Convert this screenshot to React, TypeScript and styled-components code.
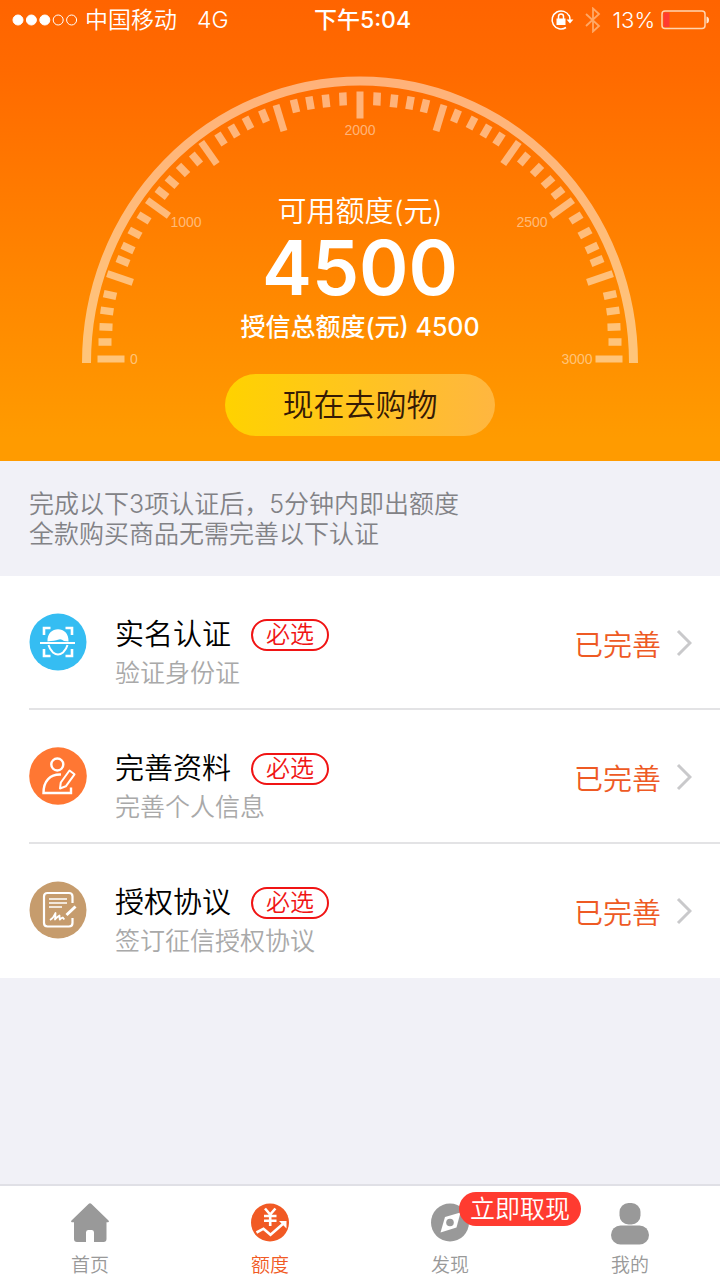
import React from "react";
import styled, { createGlobalStyle } from "styled-components";

const GlobalStyle = createGlobalStyle`
  *, *::before, *::after { box-sizing: border-box; }
  body {
    margin: 0;
    background: #f1f1f7;
    font-family: Inter, "Noto Sans CJK SC", sans-serif;
    font-weight: 350;
  }
  button { font: inherit; border: 0; cursor: pointer; }
  a { color: inherit; text-decoration: none; }
  svg { display: block; flex-shrink: 0; }
  h2, p, ul { margin: 0; padding: 0; font-weight: inherit; }
`;

const Page = styled.div`
  display: flex;
  flex-direction: column;
  min-height: 100vh;
`;

const Hero = styled.header`
  display: flex;
  flex-direction: column;
  align-items: center;
  padding-bottom: 25px;
  color: #fff;
  background: linear-gradient(#ff6400, #ff6a00 15%, #ff9b00 95%);
`;

const StatusBar = styled.div`
  display: grid;
  grid-template-columns: 1fr auto 1fr;
  align-items: center;
  width: 100%;
  height: 40px;
  padding: 0 11px 0 12px;
  font-size: 23px;
  line-height: 40px;
`;

const Carrier = styled.div`
  display: flex;
  align-items: center;
  gap: 7px;
`;

const Network = styled.span`
  margin-left: 13px;
`;

const Time = styled.time`
  padding-left: 4px;
  font-size: 23px;
  font-weight: 500;
`;

const Indicators = styled.div`
  display: flex;
  align-items: center;
  justify-content: flex-end;
  gap: 6px;
`;

const Percent = styled.span`
  margin-left: 4px;
  font-size: 22px;
`;

const Gauge = styled.section`
  display: grid;
  justify-items: center;
  max-width: 100%;
  margin-top: 36px;

  > * { grid-area: 1 / 1; }
`;

const Dial = styled.svg`
  width: 556px;
  max-width: 100%;
  font-size: 14px;
  font-family: "Liberation Sans", sans-serif;
`;

const Readout = styled.div`
  align-self: end;
  padding-bottom: 18px;
  text-align: center;
`;

const Caption = styled.h2`
  font-size: 29px;
  line-height: 40px;
`;

const Amount = styled.p`
  font-size: 75px;
  font-weight: 600;
  line-height: 72px;
`;

const Total = styled.p`
  font-size: 25px;
  font-weight: 500;
  line-height: 46px;
`;

const ShopButton = styled.button`
  width: 270px;
  height: 62px;
  margin-top: 6px;
  padding: 0 0 6px;
  border-radius: 31px;
  color: #351a05;
  background: linear-gradient(90deg, #ffd200, #ffb640);

  && { font-size: 31px; }
`;

const Notice = styled.p`
  color: #828286;
  font-size: 25px;
  line-height: 30px;

  && { padding: 28px 29px 27px; }
`;

const List = styled.ul`
  list-style: none;
  background: #fff;
`;

const Item = styled.li`
  margin-left: 29px;

  &:not(:last-child) > a { border-bottom: 2px solid #e3e3e5; }
`;

const Row = styled.a`
  display: flex;
  align-items: flex-start;
  height: 134px;
  padding: 37px 28px 0 0;
`;

const Details = styled.div`
  flex: 1;
  margin-left: 28px;
  padding-top: 2px;
`;

const TitleLine = styled.div`
  display: flex;
  align-items: center;
  gap: 20px;
  height: 40px;
`;

const Title = styled.h2`
  color: #000;
  font-size: 29px;
  line-height: 40px;
`;

const Required = styled.span`
  width: 78px;
  height: 32px;
  border: 2px solid #f01414;
  border-radius: 16px;
  color: #f01414;
  font-size: 24px;
  line-height: 28px;
  text-align: center;
`;

const Hint = styled.p`
  color: #a9a9a9;
  font-size: 25px;
  line-height: 36px;
`;

const State = styled.div`
  display: flex;
  align-items: center;
  gap: 15px;
  height: 60px;
  color: #ee5a24;
  font-size: 29px;
`;

const TabBar = styled.nav`
  display: flex;
  height: 96px;
  margin-top: auto;
  border-top: 2px solid #e0e0e6;
  background: #fff;
`;

const Tab = styled.a<{ $active?: boolean }>`
  display: flex;
  flex: 1;
  flex-direction: column;
  align-items: center;
  padding-top: 17px;
  color: ${(p) => (p.$active ? "#f15a24" : "#999")};
  font-size: 19px;
  line-height: 28px;
`;

const TabIcon = styled.span`
  position: relative;
  height: 51px;
`;

const Bubble = styled.span`
  position: absolute;
  top: -11px;
  left: 28px;
  width: 122px;
  height: 34px;
  border-radius: 17px;
  color: #fff;
  background: #ff3b30;
  font-size: 25px;
  line-height: 34px;
  text-align: center;
  white-space: nowrap;
`;

/* Centre and tilt of each tick on the left half of the dial, from zero up; every fifth is long. */
const TICKS: [number, number, number][] = [
  [29, 283, 0], [23, 266, 0], [24, 251, 2], [25, 235, 8], [28, 219, 13],
  [38, 202, 19], [41, 185, 22], [46, 172, 25], [53, 157, 28], [62, 142, 31],
  [76, 132, 36], [80, 117, 38], [90, 106, 41], [101, 94, 46], [114, 83, 50],
  [127, 77, 55], [139, 63, 57], [152, 55, 60], [166, 47, 63], [182, 40, 68],
  [198, 42, 73], [213, 30, 76], [228, 27, 80], [244, 25, 84], [261, 23, 88],
];

const LABELS: [number, number, string][] = [
  [52, 288, "0"],
  [104, 151, "1000"],
  [278, 59, "2000"],
  [450, 151, "2500"],
  [495, 288, "3000"],
];

function Tick({ x, y, angle, long }: { x: number; y: number; angle: number; long: boolean }) {
  const length = long ? 27 : 13;
  const thickness = long ? 7 : 7.5;
  return (
    <rect
      x={x - length / 2}
      y={y - thickness / 2}
      width={length}
      height={thickness}
      transform={`rotate(${angle} ${x} ${y})`}
    />
  );
}

function DialArt() {
  return (
    <Dial viewBox="0 0 556 292" role="img" aria-label="额度仪表盘">
      <path
        d="M4.5 287 A273.5 282 0 0 1 551.5 287"
        fill="none"
        stroke="#fff"
        strokeOpacity=".48"
        strokeWidth="9"
      />
      <g fill="#fff" fillOpacity=".48">
        {TICKS.map(([x, y, angle], i) => (
          <React.Fragment key={i}>
            <Tick x={x} y={y} angle={angle} long={i % 5 === 0} />
            <Tick x={556 - x} y={y} angle={-angle} long={i % 5 === 0} />
          </React.Fragment>
        ))}
        <Tick x={278} y={29} angle={90} long />
        {LABELS.map(([x, y, text]) => (
          <text key={text} x={x} y={y} textAnchor="middle">
            {text}
          </text>
        ))}
      </g>
    </Dial>
  );
}

function SignalDots() {
  return (
    <svg width="66" height="12" viewBox="0 0 66 12" fill="#fff" stroke="#fff">
      {[0, 1, 2, 3, 4].map((i) => (
        <circle key={i} cx={6 + i * 13.4} cy="6" r="5" fillOpacity={i < 3 ? 1 : 0} />
      ))}
    </svg>
  );
}

function RotationLock() {
  return (
    <svg width="28" height="22" viewBox="0 0 28 22" fill="none" stroke="#fff" strokeWidth="1.5">
      <path d="M19.2 7A9 9 0 1 0 16 18.5M19 6a9 9 0 0 1 1 5" />
      <path d="M16.6 10.5h6.8L20 14.5z" fill="#fff" stroke="none" />
      <rect x="6.5" y="9.5" width="9" height="6.5" fill="#fff" stroke="none" />
      <path d="M8.5 10V7.5a2.5 2.5 0 0 1 5 0V10" />
    </svg>
  );
}

function Bluetooth() {
  return (
    <svg width="18" height="26" viewBox="0 0 18 26" fill="none" stroke="#ffa866" strokeWidth="1.8">
      <path d="M2 7l13 12-6 5.5V1.500l6 5.500L2 19" />
    </svg>
  );
}

function Battery() {
  return (
    <svg width="48" height="20" viewBox="0 0 48 20">
      <rect x="1" y="1" width="43" height="17.500" rx="3" fill="none" stroke="#ffd5b0" strokeWidth="1.500" />
      <rect x="2.500" y="2.500" width="6" height="14.500" fill="#ff3b30" />
      <path d="M45.500 6.500q2.500.5 2.500 3.500t-2.500 3.500z" fill="#ffe6d0" />
    </svg>
  );
}

function FaceIcon() {
  return (
    <svg width="58" height="58" viewBox="0 0 58 58" fill="none" stroke="#fff" strokeWidth="2.600">
      <circle cx="29" cy="29" r="28.500" fill="#35bdf2" stroke="none" />
      <path d="M15 22v-7h6.500M36.500 15H43v7M43 36v7h-6.500M21.500 43H15v-7" />
      <path d="M18.500 28.500C17.500 12 40.500 12 39.500 28.500L35 28q-3-2.500-6-1.200-3 1-10.500 1.700z" fill="#fff" stroke="none" />
      <path d="M11 30h35" strokeWidth="2" />
      <path d="M19.500 32q1 4 4.500 7.500 5 4 10 0 3.500-3.500 4.500-7.500" strokeWidth="2" />
    </svg>
  );
}

function ProfileIcon() {
  return (
    <svg width="58" height="58" viewBox="0 0 58 58" fill="none" stroke="#fff" strokeWidth="2.400">
      <circle cx="29" cy="29" r="28.800" fill="#ff7733" stroke="none" />
      <circle cx="28.300" cy="17.500" r="6" />
      <path d="M32 27.500C21 27 14.500 34 14.500 46H42v-5.500" />
      <path d="M31 41.500l.8-6L40.500 23.500l5 3.800-8.700 12z" strokeWidth="2" strokeLinejoin="round" />
    </svg>
  );
}

function AgreementIcon() {
  return (
    <svg width="58" height="58" viewBox="0 0 58 58" fill="none" stroke="#fff" strokeWidth="2.200">
      <circle cx="29" cy="29" r="28.500" fill="#c69c6d" stroke="none" />
      <path d="M43.500 22v-6.500q0-3.500-3.500-3.500H18.500q-3.500 0-3.500 3.500v26.500q0 3.500 3.500 3.500H40q3.500 0 3.500-3.500V37" />
      <path d="M20 18h18M20 22h18M20 26h13" strokeWidth="1.700" />
      <path d="M21 39q3.500-2 5.500-7 0 3-.5 6.500 2-2.500 4.500-4 0 2 .3 4 1.500-1.500 3-2l1.500 2" strokeWidth="1.800" strokeLinejoin="round" />
      <path d="M37.500 34l9-8.500" strokeWidth="3" />
    </svg>
  );
}

function Chevron() {
  return (
    <svg width="16" height="28" viewBox="0 0 16 28" fill="none" stroke="#c9c9cb" strokeWidth="3">
      <path d="M2 2l12 12L2 26" />
    </svg>
  );
}

function HomeIcon() {
  return (
    <svg width="38" height="40" viewBox="0 0 38 40" fill="#999">
      <path d="M17.500 1q1.500-1.500 3 0L37.500 17.500q1 1.500-.5 1.700h-1.500V36q0 3-3 3H23V29.500q0-2.500-2-2.500h-4q-2 0-2 2.500V39H6q-3 0-3-3V19.200H1q-1.500-.2-.5-1.700z" />
    </svg>
  );
}

function QuotaIcon() {
  return (
    <svg width="38" height="40" viewBox="0 0 38 40" fill="none" stroke="#fff" strokeWidth="2.600">
      <circle cx="19" cy="19.500" r="19" fill="#f15a24" stroke="none" />
      <path d="M14 5.500l5.200 6 5.200-6M19.200 11.500V23M13 13h12.500M13 17.800h12.500" />
      <path d="M5.500 29.500l7-3.800 7 6L33 20" />
      <path d="M28 18h7.500v7.500z" fill="#fff" stroke="none" />
    </svg>
  );
}

function CompassIcon() {
  return (
    <svg width="38" height="40" viewBox="0 0 38 40" fill="#999">
      <circle cx="19" cy="19.500" r="19" />
      <path d="M29.500 9.500L25.500 24.500 9.500 29.500 14 14z" fill="#fff" />
      <circle cx="19" cy="19.500" r="3.800" />
    </svg>
  );
}

function UserIcon() {
  return (
    <svg width="38" height="42" viewBox="0 0 38 42" fill="#999">
      <rect x="8.500" y="0" width="21" height="21.500" rx="9" />
      <rect x="0" y="22.500" width="38" height="19" rx="9.500" />
    </svg>
  );
}

const STEPS = [
  { icon: <FaceIcon />, title: "实名认证", hint: "验证身份证" },
  { icon: <ProfileIcon />, title: "完善资料", hint: "完善个人信息" },
  { icon: <AgreementIcon />, title: "授权协议", hint: "签订征信授权协议" },
];

const TABS = [
  { icon: <HomeIcon />, label: "首页" },
  { icon: <QuotaIcon />, label: "额度", active: true },
  { icon: <CompassIcon />, label: "发现", bubble: "立即取现" },
  { icon: <UserIcon />, label: "我的" },
];

export default function App() {
  return (
    <Page>
      <GlobalStyle />
      <Hero>
        <StatusBar>
          <Carrier>
            <SignalDots />
            <span>中国移动</span>
            <Network>4G</Network>
          </Carrier>
          <Time>下午5:04</Time>
          <Indicators>
            <RotationLock />
            <Bluetooth />
            <Percent>13%</Percent>
            <Battery />
          </Indicators>
        </StatusBar>
        <Gauge>
          <DialArt />
          <Readout>
            <Caption>可用额度(元)</Caption>
            <Amount>4500</Amount>
            <Total>授信总额度(元) 4500</Total>
          </Readout>
        </Gauge>
        <ShopButton type="button">现在去购物</ShopButton>
      </Hero>

      <Notice>
        完成以下3项认证后，5分钟内即出额度
        <br />
        全款购买商品无需完善以下认证
      </Notice>

      <List>
        {STEPS.map((step) => (
          <Item key={step.title}>
            <Row href="#">
              {step.icon}
              <Details>
                <TitleLine>
                  <Title>{step.title}</Title>
                  <Required>必选</Required>
                </TitleLine>
                <Hint>{step.hint}</Hint>
              </Details>
              <State>
                已完善
                <Chevron />
              </State>
            </Row>
          </Item>
        ))}
      </List>

      <TabBar>
        {TABS.map((tab) => (
          <Tab key={tab.label} href="#" $active={tab.active}>
            <TabIcon>
              {tab.icon}
              {tab.bubble && <Bubble>{tab.bubble}</Bubble>}
            </TabIcon>
            {tab.label}
          </Tab>
        ))}
      </TabBar>
    </Page>
  );
}
